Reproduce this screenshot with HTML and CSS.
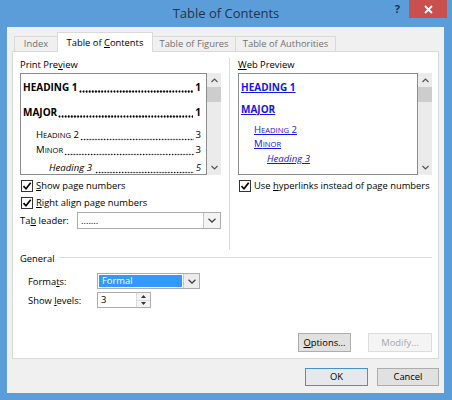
FILE: index.html
```html
<!DOCTYPE html>
<html>
<head>
<meta charset="utf-8">
<title>Table of Contents</title>
<link rel="stylesheet" href="styles.css">
</head>
<body>
<div class="window">
  <div class="titlebar">
    <div></div>
    <div class="title">Table of Contents</div>
    <div class="controls">
      <span class="help">?</span>
      <span class="close"><svg width="9" height="9" viewBox="0 0 9 9"><path d="M1 1L8 8M8 1L1 8" stroke="#fff" stroke-width="1.8" fill="none"/></svg></span>
    </div>
  </div>
  <div class="client">
    <div class="tabs">
      <div class="tab t-index">Index</div>
      <div class="tab t-toc active">Table of <u>C</u>ontents</div>
      <div class="tab t-tof">Table of Figures</div>
      <div class="tab t-toa">Table of Authorities</div>
    </div>
    <div class="panel">
      <div class="columns">
        <div class="col">
          <div class="label">Print Pre<u>v</u>iew</div>
          <div class="preview-wrap">
            <div class="preview print">
              <div class="entry p1 lv1"><span>HEADING 1</span><span class="dots"></span><span class="num">1</span></div>
              <div class="entry p2 lv1"><span>MAJOR</span><span class="dots"></span><span class="num">1</span></div>
              <div class="entry p3 lv2"><span>H<span class="sm">EADING</span> 2</span><span class="dots"></span><span class="num">3</span></div>
              <div class="entry p4 lv2"><span>M<span class="sm">INOR</span></span><span class="dots"></span><span class="num">3</span></div>
              <div class="entry p5 lv3"><span>Heading 3</span><span class="dots gap"></span><span class="num">5</span></div>
            </div>
            <div class="scrollbar">
              <svg class="arrow" width="7" height="5" viewBox="0 0 7 5"><path d="M0.5 4L3.5 1L6.5 4" stroke="#555" stroke-width="1.2" fill="none"/></svg>
              <div class="thumb"></div>
              <svg class="arrow down" width="7" height="5" viewBox="0 0 7 5"><path d="M0.5 1L3.5 4L6.5 1" stroke="#555" stroke-width="1.2" fill="none"/></svg>
            </div>
          </div>
          <div class="check first"><span class="box"><svg width="10" height="10" viewBox="0 0 10 10"><path d="M1.5 5.2L4 7.8L8.7 1.8" stroke="#000" stroke-width="1.7" fill="none"/></svg></span><span><u>S</u>how page numbers</span></div>
          <div class="check"><span class="box"><svg width="10" height="10" viewBox="0 0 10 10"><path d="M1.5 5.2L4 7.8L8.7 1.8" stroke="#000" stroke-width="1.7" fill="none"/></svg></span><span><u>R</u>ight align page numbers</span></div>
          <div class="leader-row">
            <span class="leader-label">Ta<u>b</u> leader:</span>
            <div class="select leader">
              <span class="select-text">.......</span>
              <span class="select-btn"><svg width="8" height="5" viewBox="0 0 8 5"><path d="M0.5 0.8L4 4L7.5 0.8" stroke="#444" stroke-width="1.3" fill="none"/></svg></span>
            </div>
          </div>
        </div>
        <div class="sep"></div>
        <div class="col">
          <div class="label"><u>W</u>eb Preview</div>
          <div class="preview-wrap">
            <div class="preview web">
              <div class="entry w1 lv1"><a>HEADING 1</a></div>
              <div class="entry w2 lv1"><a>MAJOR</a></div>
              <div class="entry w3 lv2"><a>H<span class="sm">EADING</span> 2</a></div>
              <div class="entry w4 lv2"><a>M<span class="sm">INOR</span></a></div>
              <div class="entry w5 lv3"><a>Heading 3</a></div>
            </div>
            <div class="scrollbar">
              <svg class="arrow" width="7" height="5" viewBox="0 0 7 5"><path d="M0.5 4L3.5 1L6.5 4" stroke="#555" stroke-width="1.2" fill="none"/></svg>
              <div class="thumb"></div>
              <svg class="arrow down" width="7" height="5" viewBox="0 0 7 5"><path d="M0.5 1L3.5 4L6.5 1" stroke="#555" stroke-width="1.2" fill="none"/></svg>
            </div>
          </div>
          <div class="check first"><span class="box"><svg width="10" height="10" viewBox="0 0 10 10"><path d="M1.5 5.2L4 7.8L8.7 1.8" stroke="#000" stroke-width="1.7" fill="none"/></svg></span><span>Use <u>h</u>yperlinks instead of page numbers</span></div>
        </div>
      </div>
      <div class="general">
        <span>General</span><span class="rule"></span>
      </div>
      <div class="form-row formats">
        <span class="form-label">Forma<u>t</u>s:</span>
        <div class="select fmt">
          <span class="select-text sel">Formal</span>
          <span class="select-btn"><svg width="8" height="5" viewBox="0 0 8 5"><path d="M0.5 0.8L4 4L7.5 0.8" stroke="#444" stroke-width="1.3" fill="none"/></svg></span>
        </div>
      </div>
      <div class="form-row levels">
        <span class="form-label">Show <u>l</u>evels:</span>
        <div class="spin">
          <span class="spin-text">3</span>
          <span class="spin-btns">
            <span class="spin-btn"><svg width="5" height="3" viewBox="0 0 5 3"><path d="M0 3L2.5 0L5 3Z" fill="#333"/></svg></span>
            <span class="spin-btn"><svg width="5" height="3" viewBox="0 0 5 3"><path d="M0 0L2.5 3L5 0Z" fill="#333"/></svg></span>
          </span>
        </div>
      </div>
      <div class="panel-buttons">
        <button class="btn options"><u>O</u>ptions...</button>
        <button class="btn modify" disabled>Modify...</button>
      </div>
    </div>
    <div class="dialog-buttons">
      <button class="btn ok">OK</button>
      <button class="btn cancel">Cancel</button>
    </div>
  </div>
</div>
</body>
</html>
```

FILE: styles.css
```css
* { box-sizing: border-box; }
html, body { margin: 0; padding: 0; }
body {
  width: 452px;
  height: 400px;
  overflow: hidden;
  background: #5b9dd9;
  font-family: "Open Sans", "Noto Sans", sans-serif;
  font-size: 9.4px;
  color: #000;
}
u { text-decoration: underline; text-underline-offset: 1px; }

.window { width: 452px; height: 400px; display: flex; flex-direction: column; }

.titlebar {
  height: 27px;
  display: grid;
  grid-template-columns: 1fr auto 1fr;
}
.title {
  font-size: 13px;
  color: #253447;
  line-height: 27px;
}
.controls {
  justify-self: end;
  display: flex;
  align-items: flex-start;
  margin-right: 5px;
}
.help {
  font-weight: bold;
  font-size: 11px;
  color: #1d3550;
  line-height: 18px;
  margin-right: 9px;
}
.close {
  width: 38px;
  height: 18px;
  background: #c9504f;
  display: flex;
  align-items: center;
  justify-content: center;
}

.client {
  margin: 0 8px 0 7px;
  height: 366px;
  background: #f0f0f0;
  padding: 5px 5px 0 5px;
}

.tabs {
  position: relative;
  z-index: 1;
  display: flex;
  align-items: flex-end;
  height: 19px;
  margin-left: 2px;
}
.tab {
  height: 15px;
  border: 1px solid #d9d9d9;
  border-bottom: none;
  background: #f0f0f0;
  color: #707070;
  text-align: center;
  line-height: 13px;
  margin-left: -1px;
}
.tab.t-index { margin-left: 0; width: 44px; }
.tab.t-toc { width: 96px; }
.tab.t-tof { width: 84px; }
.tab.t-toa { width: 101px; }
.tab.active {
  height: 20px;
  margin-bottom: -1px;
  background: #fff;
  color: #000;
  line-height: 20px;
}

.panel {
  height: 308px;
  border: 1px solid #d9d9d9;
  background: #fff;
  padding: 6px 6px 6px 7px;
  display: flex;
  flex-direction: column;
}

.columns {
  display: grid;
  grid-template-columns: 201px 1px 1fr;
  column-gap: 8px;
  height: 192px;
}
.sep { background: #dcdcdc; }

.label { height: 14px; line-height: 14px; }

.preview-wrap {
  margin-top: 1px;
  display: flex;
  height: 102px;
}
.preview {
  flex: 1;
  border: 1px solid #8c8c8c;
  background: #fff;
  overflow: hidden;
  padding: 0 5px 0 1px;
}
.print { flex: none; width: 187px; }
.scrollbar {
  width: 14px;
  background: #ebebeb;
  display: flex;
  flex-direction: column;
  align-items: center;
}
.scrollbar .arrow { margin-top: 5px; flex: none; }
.scrollbar .thumb { width: 14px; height: 15px; background: #cdcdcd; margin-top: 4px; }
.scrollbar .arrow.down { margin-top: auto; margin-bottom: 5px; }

.entry {
  display: flex;
  height: 14px;
  line-height: 14px;
  white-space: nowrap;
}
.entry .dots {
  flex: 1;
  min-width: 0;
  margin: 0 1px;
  background-image: radial-gradient(circle at 1.5px 1.5px, #111 0.75px, transparent 1.05px);
  background-size: 2.9px 3px;
  background-repeat: repeat-x;
  background-position: 0 9.5px;
}
.entry .dots.gap { margin-left: 3px; }
.lv1 .dots {
  background-image: radial-gradient(circle at 1.5px 1.5px, #000 0.95px, transparent 1.25px);
  background-size: 3.1px 3px;
  background-position: 0 10px;
}
.entry .num { margin-left: 1px; }
.lv1 { font-weight: bold; font-size: 10px; padding-left: 1px; }
.lv2 { font-size: 9.6px; padding-left: 14px; }
.lv2 .sm { font-size: 7.6px; }
.lv3 { font-style: italic; font-size: 9.6px; padding-left: 27px; }

.p1 { margin-top: 6px; }
.p2 { margin-top: 11px; }
.p3 { margin-top: 9px; }
.p4 { margin-top: 1px; }
.p5 { margin-top: 4px; }

.web .entry a { color: #1515e6; text-decoration: underline; }
.w1 { margin-top: 6px; }
.w2 { margin-top: 8px; }
.w3 { margin-top: 7px; }
.w4 { margin-top: 0; }
.w5 { margin-top: 1px; }

.check {
  display: flex;
  align-items: center;
  height: 17px;
  gap: 3px;
  padding-left: 1px;
  white-space: nowrap;
}
.check.first { margin-top: 2px; }
.box {
  flex: none;
  width: 12px;
  height: 12px;
  border: 1px solid #333;
  background: #fff;
  display: flex;
  align-items: center;
  justify-content: center;
}

.leader-row {
  display: flex;
  align-items: center;
  margin-top: 1px;
  height: 17px;
}
.leader-label { width: 57px; }

.select {
  display: flex;
  border: 1px solid #acacac;
  background: #fff;
  height: 100%;
}
.leader { flex: 1; height: 17px; }
.select-text { flex: 1; padding-left: 3px; line-height: 15px; }
.select-btn {
  width: 16px;
  border-left: 1px solid #c8c8c8;
  background: #ececec;
  display: flex;
  align-items: center;
  justify-content: center;
}
.leader .select-btn { width: 17px; background: #f4f4f4; }

.general {
  margin-top: 2px;
  display: flex;
  align-items: center;
  height: 14px;
  line-height: 14px;
}
.general .rule { flex: 1; border-top: 1px solid #dcdcdc; margin-left: 4px; margin-top: -3px; }

.form-row {
  display: flex;
  align-items: center;
  height: 16px;
  padding-left: 8px;
}
.formats { margin-top: 7px; }
.levels { margin-top: 3px; }
.form-label { width: 69px; }
.fmt { width: 103px; height: 16px; }
.fmt .sel {
  background: #3399ff;
  color: #fff;
  line-height: 12px;
  padding-left: 3px;
  margin: 1px;
}

.spin {
  width: 54px;
  height: 16px;
  border: 1px solid #acacac;
  background: #fff;
  display: flex;
}
.spin-text { flex: 1; padding-left: 3px; line-height: 14px; }
.spin-btns { width: 14px; display: flex; flex-direction: column; border-left: 1px solid #dcdcdc; }
.spin-btn { flex: 1; display: flex; align-items: center; justify-content: center; background: #f4f4f4; }
.spin-btn + .spin-btn { border-top: 1px solid #dcdcdc; }

.btn {
  font-family: "Open Sans", "Noto Sans", sans-serif;
  font-size: 9.4px;
  color: #000;
  background: #e1e1e1;
  border: 1px solid #adadad;
  padding: 0;
  margin: 0;
  line-height: 16px;
}
.panel-buttons {
  margin-top: auto;
  display: flex;
  justify-content: flex-end;
  gap: 17px;
}
.options { width: 53px; height: 19px; }
.modify { width: 64px; height: 19px; background: #f4f4f4; border-color: #dcdcdc; color: #a8a8a8; }

.dialog-buttons {
  margin-top: 9px;
  display: flex;
  justify-content: flex-end;
  gap: 9px;
}
.ok { width: 63px; height: 18px; border-color: #4a8fd0; background: #e5e8ec; }
.cancel { width: 62px; height: 18px; }
```
